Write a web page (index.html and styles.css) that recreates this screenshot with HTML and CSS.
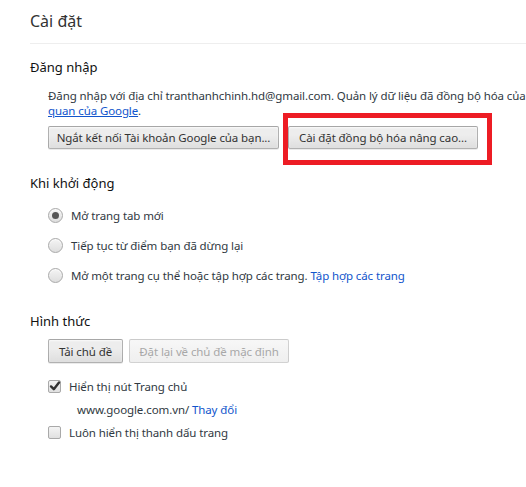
FILE: index.html
```html
<!DOCTYPE html>
<html lang="vi">
<head>
<meta charset="utf-8">
<link rel="stylesheet" href="styles.css">
</head>
<body>
<div class="page">
  <header class="title-bar"><h1 class="title">Cài đặt</h1></header>

  <section class="section signin">
    <h3 class="section-title">Đăng nhập</h3>
    <div class="content">
      <p class="desc">Đăng nhập với địa chỉ tranthanhchinh.hd@gmail.com. Quản lý dữ liệu đã đồng bộ hóa của<br><a class="link" href="#">quan của Google</a>.</p>
      <div class="btn-row">
        <button class="btn btn-disconnect">Ngắt kết nối Tài khoản Google của bạn...</button>
        <span class="highlight"><button class="btn btn-sync">Cài đặt đồng bộ hóa nâng cao...</button></span>
      </div>
    </div>
  </section>

  <section class="section startup">
    <h3 class="section-title">Khi khởi động</h3>
    <div class="content">
      <div class="opt"><span class="radio checked"></span><span class="label">Mở trang tab mới</span></div>
      <div class="opt"><span class="radio"></span><span class="label">Tiếp tục từ điểm bạn đã dừng lại</span></div>
      <div class="opt"><span class="radio"></span><span class="label">Mở một trang cụ thể hoặc tập hợp các trang. <a class="link plain" href="#">Tập hợp các trang</a></span></div>
    </div>
  </section>

  <section class="section appearance">
    <h3 class="section-title">Hình thức</h3>
    <div class="content">
      <div class="btn-row small">
        <button class="btn btn-theme">Tải chủ đề</button>
        <button class="btn disabled btn-reset">Đặt lại về chủ đề mặc định</button>
      </div>
      <div class="chk-row"><span class="checkbox checked"><svg viewBox="0 0 14 14" width="14" height="14"><path d="M3 7.4 L5.8 10.2 L11 3.4" fill="none" stroke="#333" stroke-width="2.4" stroke-linecap="round" stroke-linejoin="round"/></svg></span><span class="label">Hiển thị nút Trang chủ</span></div>
      <div class="url-row">www.google.com.vn/ <a class="link plain" href="#">Thay đổi</a></div>
      <div class="chk-row"><span class="checkbox"></span><span class="label">Luôn hiển thị thanh dấu trang</span></div>
    </div>
  </section>
</div>
</body>
</html>
```

FILE: styles.css
```css
html, body {
  margin: 0;
  padding: 0;
  background: #fff;
}
body {
  font-family: "Segoe UI", "Noto Sans", "Open Sans", sans-serif;
  font-size: 12px;
  color: #303942;
  overflow: hidden;
  width: 526px;
  height: 487px;
}
.page {
  padding-left: 30px;
}
.title-bar {
  height: 44px;
  border-bottom: 1px solid #eeeeee;
  box-sizing: border-box;
}
.title {
  margin: 0;
  padding-top: 10px;
  font-size: 16px;
  font-weight: normal;
  line-height: 22px;
  color: #333;
}
.section-title {
  margin: 0;
  font-size: 13px;
  font-weight: normal;
  line-height: 18px;
  color: #111;
}
.signin { padding-top: 14px; }
.content {
  padding-left: 18px;
  font-size: 11.5px;
  letter-spacing: -0.1px;
}
.desc {
  margin: 12px 0 0;
  line-height: 15px;
  white-space: nowrap;
  color: #303942;
}
.link {
  color: #1155cc;
  text-decoration: underline;
}
.link.plain { text-decoration: none; }
.btn-row {
  display: flex;
  align-items: center;
  margin-top: 8px;
  gap: 9px;
}
.btn {
  font: inherit;
  letter-spacing: inherit;
  color: #333;
  height: 23px;
  padding: 0;
  border: 1px solid rgba(0,0,0,0.25);
  border-radius: 2px;
  background: linear-gradient(#ededed, #ededed 38%, #dedede);
  box-shadow: 0 1px 0 rgba(0,0,0,0.08), inset 0 1px 2px rgba(255,255,255,0.75);
  white-space: nowrap;
  line-height: 21px;
  text-align: center;
}
.btn-disconnect { width: 231px; }
.btn-sync { width: 190px; }
.highlight {
  display: inline-block;
  outline: 5px solid #ed1c24;
  padding: 8px 9px 11px 0;
  margin: -8px -9px -11px 0;
  line-height: 0;
}
.startup { padding-top: 25px; }
.startup .content { padding-top: 8px; }
.opt {
  display: flex;
  align-items: center;
  height: 30px;
}
.radio {
  width: 13px;
  height: 13px;
  border-radius: 50%;
  border: 1px solid #a9a9a9;
  background: linear-gradient(#f4f4f4, #dedede);
  box-shadow: inset 0 1px 1px rgba(255,255,255,0.8);
  position: relative;
  flex: none;
  margin-right: 8px;
}
.radio.checked::after {
  content: "";
  position: absolute;
  left: 3px; top: 3px;
  width: 7px; height: 7px;
  border-radius: 50%;
  background: #555;
}
.label { color: #303942; }
.appearance { padding-top: 22px; }
.btn-row.small { margin-top: 9px; gap: 6px; }
.btn-row.small .btn { height: 24px; }
.btn-theme { width: 75px; }
.btn-reset { width: 160px; }
.btn.disabled {
  color: #a8a8a8;
  background: linear-gradient(#f7f7f7, #efefef);
  border-color: rgba(0,0,0,0.15);
  box-shadow: none;
}
.chk-row {
  display: flex;
  align-items: center;
  height: 23px;
  margin-top: 12px;
}
.url-row + .chk-row { margin-top: 0; }
.checkbox {
  width: 11px;
  height: 11px;
  border: 1px solid #a9a9a9;
  border-radius: 2px;
  background: linear-gradient(#f4f4f4, #e0e0e0);
  flex: none;
  margin-right: 8px;
  position: relative;
}
.checkbox svg {
  position: absolute;
  left: -1px; top: -2px;
}
.url-row {
  height: 23px;
  line-height: 23px;
  padding-left: 29px;
  color: #303942;
}
```
